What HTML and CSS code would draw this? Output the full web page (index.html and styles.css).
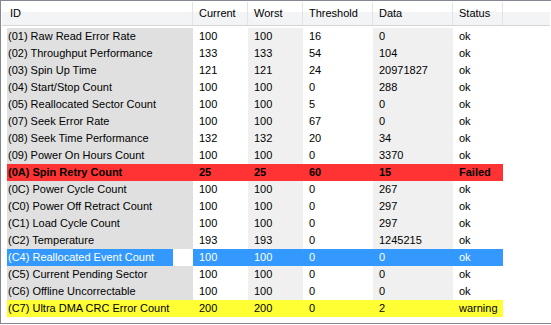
FILE: index.html
```html
<!DOCTYPE html>
<html lang="en">
<head>
<meta charset="UTF-8">
<meta name="viewport" content="width=device-width, initial-scale=1.0">
<title>S.M.A.R.T.</title>
<link rel="stylesheet" href="styles.css">
</head>
<body>

<div class="list">
    <div class="list-header">
        <div class="hcell col-id">ID</div>
        <div class="hcell col-cur">Current</div>
        <div class="hcell col-worst">Worst</div>
        <div class="hcell col-thr">Threshold</div>
        <div class="hcell col-data">Data</div>
        <div class="hcell col-status">Status</div>
        <div class="hcell col-rest"></div>
    </div>
    <div id="rows" class="list-body"></div>
</div>

<script>
    var attributes = [
        ['01', 'Raw Read Error Rate', 100, 100, 16, 0, 'ok'],
        ['02', 'Throughput Performance', 133, 133, 54, 104, 'ok'],
        ['03', 'Spin Up Time', 121, 121, 24, 20971827, 'ok'],
        ['04', 'Start/Stop Count', 100, 100, 0, 288, 'ok'],
        ['05', 'Reallocated Sector Count', 100, 100, 5, 0, 'ok'],
        ['07', 'Seek Error Rate', 100, 100, 67, 0, 'ok'],
        ['08', 'Seek Time Performance', 132, 132, 20, 34, 'ok'],
        ['09', 'Power On Hours Count', 100, 100, 0, 3370, 'ok'],
        ['0A', 'Spin Retry Count', 25, 25, 60, 15, 'Failed'],
        ['0C', 'Power Cycle Count', 100, 100, 0, 267, 'ok'],
        ['C0', 'Power Off Retract Count', 100, 100, 0, 297, 'ok'],
        ['C1', 'Load Cycle Count', 100, 100, 0, 297, 'ok'],
        ['C2', 'Temperature', 193, 193, 0, 1245215, 'ok'],
        ['C4', 'Reallocated Event Count', 100, 100, 0, 0, 'ok'],
        ['C5', 'Current Pending Sector', 100, 100, 0, 0, 'ok'],
        ['C6', 'Offline Uncorrectable', 100, 100, 0, 0, 'ok'],
        ['C7', 'Ultra DMA CRC Error Count', 200, 200, 0, 2, 'warning']
    ];

    var selectedId = 'C4';
    var cols = ['col-cur', 'col-worst', 'col-thr', 'col-data', 'col-status'];
    var container = document.getElementById('rows');

    attributes.forEach(function(attr) {
        var row = document.createElement('div');
        row.classList.add('row');
        if (attr[6] === 'Failed') row.classList.add('row-failed');
        if (attr[6] === 'warning') row.classList.add('row-warning');
        if (attr[0] === selectedId) row.classList.add('row-selected');

        var idCell = document.createElement('div');
        idCell.classList.add('cell', 'col-id');
        var label = document.createElement('span');
        label.classList.add('label');
        label.textContent = '(' + attr[0] + ') ' + attr[1];
        idCell.appendChild(label);
        row.appendChild(idCell);

        for (var i = 0; i < cols.length; i++) {
            var cell = document.createElement('div');
            cell.classList.add('cell', cols[i]);
            cell.textContent = attr[i + 2];
            row.appendChild(cell);
        }

        container.appendChild(row);
    });
</script>

</body>
</html>
```

FILE: styles.css
```css
body {
    margin: 0;
    font-family: 'Liberation Sans', Arial, sans-serif;
    font-size: 11px;
    color: #000;
    background-color: #fff;
    overflow: hidden;
}
.list {
    width: 100%;
    height: 324px;
    padding: 1px;
    border: 1px solid #828790;
    border-right: none;
    box-sizing: border-box;
    overflow: hidden;
}
.list-header {
    display: flex;
    height: 23px;
    border-bottom: 1px solid #d5d5d5;
    background: linear-gradient(#fff 0, #fff 45%, #f3f4f6 45%, #f3f4f6 100%);
}
.hcell {
    box-sizing: border-box;
    padding-left: 6px;
    line-height: 23px;
    border-right: 1px solid #e3e4e6;
}
.list-header .col-id {
    width: 191px;
    padding-left: 8px;
}
.col-rest {
    flex: 1;
    border-right: none;
}
.list-body {
    padding: 2px 0 0 5px;
}
.row {
    display: flex;
    height: 17px;
    line-height: 16px;
}
.cell {
    box-sizing: border-box;
    padding-left: 6px;
    white-space: nowrap;
}
.col-id {
    width: 186px;
}
.col-cur {
    width: 55px;
}
.col-worst {
    width: 55px;
}
.col-thr {
    width: 70px;
}
.col-data {
    width: 80px;
}
.col-status {
    width: 50px;
}
.row .col-id {
    padding-left: 0;
    background-color: #e0e0e0;
}
.row .col-worst,
.row .col-data {
    background-color: #f0f0f0;
}
.label {
    display: inline-block;
    padding: 0 2px 0 1px;
}

/* highlighted rows */
.row-failed .cell,
.row-failed .col-id,
.row-failed .col-worst,
.row-failed .col-data {
    background-color: #ff3333;
    font-weight: bold;
}
.row-warning .cell,
.row-warning .col-id,
.row-warning .col-worst,
.row-warning .col-data {
    background-color: #ffff33;
}
.row-selected .cell,
.row-selected .col-worst,
.row-selected .col-data {
    background-color: #3399ff;
    color: #fff;
}
.row-selected .col-id {
    background-color: #fff;
}
.row-selected .label {
    width: 163px;
    height: 17px;
    background-color: #3399ff;
}
```
